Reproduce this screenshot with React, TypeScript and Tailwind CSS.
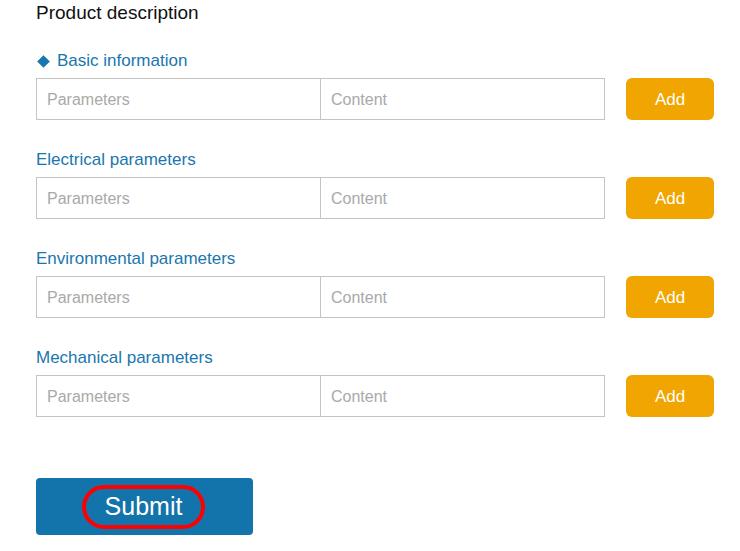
import React from "react";

const sections = [
  { title: "Basic information", marker: true },
  { title: "Electrical parameters", marker: false },
  { title: "Environmental parameters", marker: false },
  { title: "Mechanical parameters", marker: false },
];

const App: React.FC = () => {
  return (
    <div
      className="w-[740px] h-[551px] bg-white pl-[36px] pt-[1px]"
      style={{ fontFamily: '"Liberation Sans", Arial, sans-serif' }}
    >
      {/* Title */}
      <div className="h-[24px] leading-[24px] text-[19px] text-[#111]">
        Product description
      </div>
      <div className="mt-[25px]">
        {sections.map((s) => (
          <div key={s.title} className="mb-[29px]">
            <div className="flex items-center h-[20px] pt-[2px] text-[17px] text-[#1a76ae] mb-[8px]">
              {s.marker && (
                <span className="inline-block w-[9px] h-[9px] bg-[#1a76ae] rotate-45 ml-[3px] mr-[9px]" />
              )}
              {s.title}
            </div>
            <div className="flex items-center h-[42px]">
              <div className="w-[285px] h-[42px] border border-[#c4c4c4] pl-[10px] pt-[2px] flex items-center text-[16px] text-[#a9a9a9]">
                Parameters
              </div>
              <div className="w-[284px] h-[42px] border border-l-0 border-[#c4c4c4] pl-[10px] pt-[2px] flex items-center text-[16px] text-[#a9a9a9]">
                Content
              </div>
              <button className="ml-[21px] w-[88px] h-[42px] rounded-[6px] bg-[#f0a500] text-white text-[17px] pt-[1px]">
                Add
              </button>
            </div>
          </div>
        ))}
      </div>
      <button className="mt-[61px] w-[217px] h-[57px] rounded-[4px] bg-[#1274ab] flex items-center justify-center">
        <span className="w-[123px] h-[44px] -ml-[2px] rounded-full border-[4px] border-[#ff0000] flex items-center justify-center text-white text-[25px]">
          Submit
        </span>
      </button>
    </div>
  );
};

export default App;
